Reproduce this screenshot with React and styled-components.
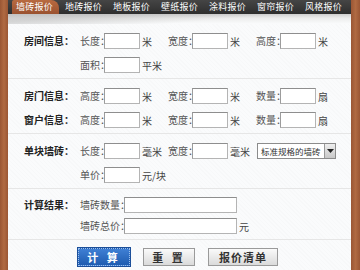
import React from 'react'
import styled, { createGlobalStyle } from 'styled-components'

const GlobalStyle = createGlobalStyle`
  html, body {
    margin: 0;
    padding: 0;
    width: 360px;
    height: 270px;
    overflow: hidden;
    background: #fafafa;
  }
  * { box-sizing: border-box; }
`

const tabs = ['墙砖报价', '地砖报价', '地板报价', '壁纸报价', '涂料报价', '窗帘报价', '风格报价']

export default function App() {
  return (
    <Frame>
      <GlobalStyle />
      <Side />
      <Main>
        <TabBar>
          {tabs.map((t, i) => (
            <Tab key={t} $active={i === 0}>{t}</Tab>
          ))}
        </TabBar>
        <Swoosh />
        <Section>
          <Heading>房间信息：</Heading>
          <Rows>
            <Row>
              <Field label="长度：" unit="米" />
              <Field label="宽度：" unit="米" />
              <Field label="高度：" unit="米" />
            </Row>
            <Row>
              <Field label="面积：" unit="平米" />
            </Row>
          </Rows>
        </Section>
        <Section>
          <Rows>
            <Row>
              <Heading>房门信息：</Heading>
              <Field label="高度：" unit="米" />
              <Field label="宽度：" unit="米" />
              <Field label="数量：" unit="扇" />
            </Row>
            <Row>
              <Heading>窗户信息：</Heading>
              <Field label="高度：" unit="米" />
              <Field label="宽度：" unit="米" />
              <Field label="数量：" unit="扇" />
            </Row>
          </Rows>
        </Section>
        <Section>
          <Heading>单块墙砖：</Heading>
          <Rows>
            <Row>
              <Field label="长度：" unit="毫米" />
              <Field label="宽度：" unit="毫米" />
              <Select>
                <span>标准规格的墙砖</span>
                <Arrow>
                  <svg width="7" height="4" viewBox="0 0 7 4"><path d="M0 0h7L3.5 4z" fill="#222" /></svg>
                </Arrow>
              </Select>
            </Row>
            <Row>
              <Field label="单价：" unit="元/块" />
            </Row>
          </Rows>
        </Section>
        <Section $tight>
          <Heading>计算结果：</Heading>
          <Rows $gap={5}>
            <Row>
              <Label $w={44}>墙砖数量：</Label>
              <Input $w={113} />
            </Row>
            <Row>
              <Label $w={44}>墙砖总价：</Label>
              <Input $w={113} />
              <Unit>元</Unit>
            </Row>
          </Rows>
        </Section>
        <Buttons>
          <Button $primary $spread>计 算</Button>
          <Button $spread>重 置</Button>
          <Button $w={70}>报价清单</Button>
        </Buttons>
      </Main>
      <Side $right />
    </Frame>
  )
}

function Field({ label, unit }) {
  return (
    <FieldBox>
      <Label>{label}</Label>
      <Input />
      <Unit>{unit}</Unit>
    </FieldBox>
  )
}

const Frame = styled.div`
  display: flex;
  width: 360px;
  height: 270px;
  font-family: "Noto Sans CJK SC", "Liberation Sans", sans-serif;
  font-size: 10px;
  font-feature-settings: "halt";
  color: #333;
`

const Side = styled.div`
  width: ${(p) => (p.$right ? '9px' : '8px')};
  flex: none;
  background: linear-gradient(90deg, #9a5634, #b06a42 50%, #9a5634);
`

const Main = styled.div`
  flex: 1;
  display: flex;
  flex-direction: column;
  background:
    repeating-linear-gradient(45deg, rgba(0,0,0,0.012) 0 1px, transparent 1px 3px),
    #fafbfc;
`

const TabBar = styled.div`
  height: 14px;
  display: flex;
  align-items: stretch;
  padding-left: 4px;
  gap: 1px;
  background: linear-gradient(#454545, #2e2e2e);
`

const Tab = styled.div`
  width: 47px;
  display: flex;
  align-items: center;
  justify-content: center;
  color: #fff;
  font-size: 9px;
  line-height: 14px;
  letter-spacing: 0.3px;
  ${(p) => p.$active && `
    background: linear-gradient(#b86a40, #9a5230);
    border-radius: 2px 8px 0 0;
    padding-right: 2px;
  `}
`

const Swoosh = styled.div`
  height: 10px;
  background:
    linear-gradient(175deg, rgba(180,180,180,0.5) 0 20%, transparent 60%),
    linear-gradient(#cfcfcf, #ececec 40%, #fafbfc);
`

const Section = styled.div`
  display: flex;
  align-items: flex-start;
  padding: ${(p) => (p.$tight ? '8px 0 5px 16px' : '9px 0 5px 16px')};
  border-bottom: 1px solid #e6e6e6;
`

const Heading = styled.div`
  width: 56px;
  flex: none;
  height: 16px;
  line-height: 16px;
  font-weight: bold;
  color: #222;
`

const Rows = styled.div`
  display: flex;
  flex-direction: column;
  gap: ${(p) => (p.$gap ?? 8)}px;
`

const Row = styled.div`
  display: flex;
  align-items: center;
  height: 16px;
`

const FieldBox = styled.div`
  width: 88px;
  display: flex;
  align-items: center;
`

const Label = styled.span`
  width: ${(p) => p.$w ?? 24}px;
  flex: none;
  color: #555;
  white-space: nowrap;
  line-height: 16px;
`

const Input = styled.div`
  width: ${(p) => p.$w ?? 36}px;
  height: 16px;
  flex: none;
  background: #fff;
  border: 1px solid #b4b4b4;
  border-top-color: #8e8e8e;
  border-left-color: #9c9c9c;
`

const Unit = styled.span`
  padding-left: 2px;
  color: #444;
  white-space: nowrap;
`

const Select = styled.div`
  width: 79px;
  height: 16px;
  margin-left: 1px;
  display: flex;
  align-items: center;
  justify-content: space-between;
  background: #fff;
  border: 1px solid #8c8c8c;
  padding-left: 3px;
  font-size: 8.5px;
  color: #333;
  white-space: nowrap;
`

const Arrow = styled.span`
  width: 11px;
  height: 14px;
  display: flex;
  align-items: center;
  justify-content: center;
  background: linear-gradient(#eee, #c8c8c8);
  border-left: 1px solid #999;
`

const Buttons = styled.div`
  display: flex;
  gap: 13px;
  padding: 8px 0 0 70px;
`

const Button = styled.div`
  width: ${(p) => p.$w ?? 52}px;
  height: 18px;
  display: flex;
  align-items: center;
  justify-content: center;
  font-weight: bold;
  font-size: 11px;
  letter-spacing: ${(p) => (p.$spread ? '3px' : '1px')};
  color: ${(p) => (p.$primary ? '#fff' : '#333')};
  background: ${(p) => (p.$primary
    ? 'linear-gradient(#3f7fd4, #1f5cb0)'
    : 'linear-gradient(#fafafa, #dadada)')};
  border: ${(p) => (p.$primary ? '1px dotted #9cc0ee' : '1px solid #9a9a9a')};
  outline: ${(p) => (p.$primary ? '1px solid #1c4f9a' : 'none')};
`
